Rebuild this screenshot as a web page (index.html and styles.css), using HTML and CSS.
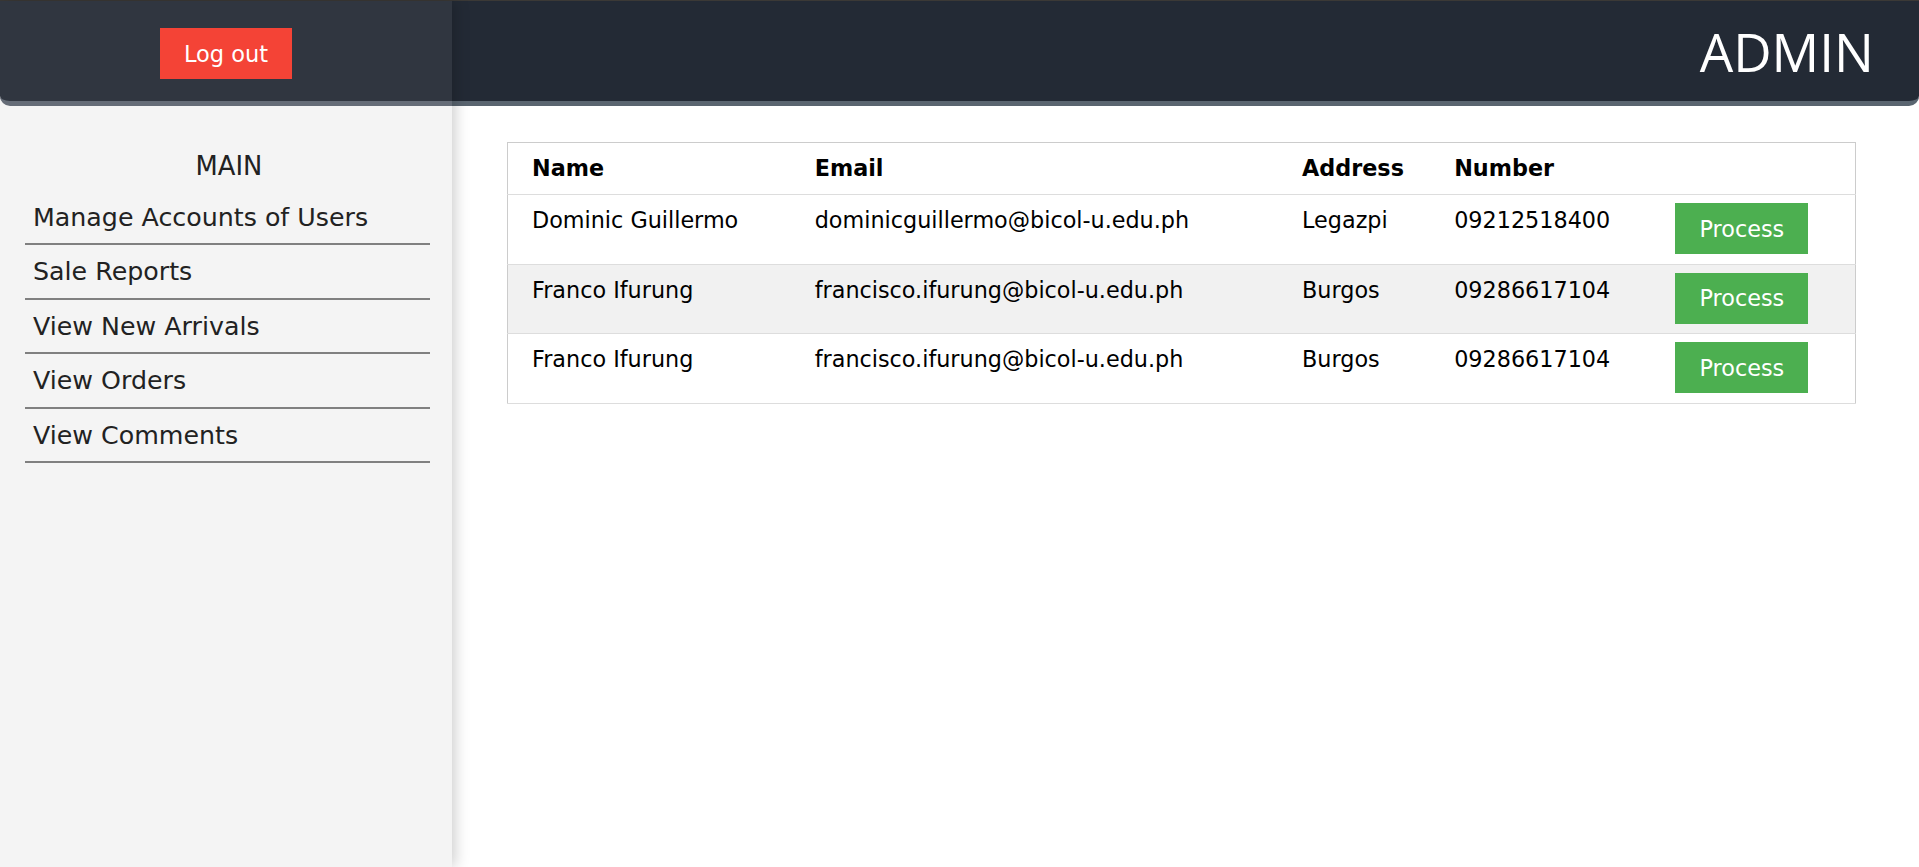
FILE: index.html
```html
<!DOCTYPE html>
<html lang="en">
<head>
<meta charset="utf-8">
<title>Admin</title>
<link rel="stylesheet" href="styles.css">
</head>
<body>
<div class="page">
  <aside class="sidebar">
    <div class="sidebar-top">
      <button class="btn-logout" type="button">Log out</button>
    </div>
    <nav class="menu">
      <div class="menu-title">MAIN</div>
      <a class="menu-item" href="#">Manage Accounts of Users</a>
      <a class="menu-item" href="#">Sale Reports</a>
      <a class="menu-item" href="#">View New Arrivals</a>
      <a class="menu-item" href="#">View Orders</a>
      <a class="menu-item" href="#">View Comments</a>
    </nav>
  </aside>
  <div class="main">
    <header class="topbar">
      <h1 class="brand">ADMIN</h1>
    </header>
    <section class="content">
      <table class="orders">
        <colgroup>
          <col class="c-name"><col class="c-email"><col class="c-addr"><col class="c-num"><col class="c-act">
        </colgroup>
        <thead>
          <tr><th>Name</th><th>Email</th><th>Address</th><th>Number</th><th></th></tr>
        </thead>
        <tbody>
          <tr>
            <td>Dominic Guillermo</td>
            <td>dominicguillermo@bicol-u.edu.ph</td>
            <td>Legazpi</td>
            <td>09212518400</td>
            <td class="act"><button class="btn-process" type="button">Process</button></td>
          </tr>
          <tr>
            <td>Franco Ifurung</td>
            <td>francisco.ifurung@bicol-u.edu.ph</td>
            <td>Burgos</td>
            <td>09286617104</td>
            <td class="act"><button class="btn-process" type="button">Process</button></td>
          </tr>
          <tr>
            <td>Franco Ifurung</td>
            <td>francisco.ifurung@bicol-u.edu.ph</td>
            <td>Burgos</td>
            <td>09286617104</td>
            <td class="act"><button class="btn-process" type="button">Process</button></td>
          </tr>
        </tbody>
      </table>
    </section>
  </div>
</div>
</body>
</html>
```
FILE: styles.css
```css
* { box-sizing: border-box; }

html, body {
  margin: 0;
  padding: 0;
  height: 100%;
  background: #ffffff;
}

body {
  font-family: "DejaVu Sans", Verdana, sans-serif;
  color: #222;
  overflow: hidden;
}

.page {
  display: grid;
  grid-template-columns: 452px 1fr;
  height: 100vh;
  border-top: 1px solid #3b3936;
}

/* ---------- Sidebar ---------- */
.sidebar {
  position: relative;
  z-index: 2;
  background: #f4f4f4;
  box-shadow: 3px 0 14px rgba(0, 0, 0, 0.2);
  display: flex;
  flex-direction: column;
}

.sidebar-top {
  height: 105px;
  background: #303640;
  border-bottom: 5px solid #656c77;
  border-bottom-left-radius: 10px;
  display: flex;
  justify-content: center;
  align-items: flex-start;
  padding-top: 27px;
}

.btn-logout {
  width: 132px;
  height: 51px;
  border: none;
  background: #f44336;
  color: #ffffff;
  font-family: "DejaVu Sans", Verdana, sans-serif;
  font-size: 22.5px;
  padding: 0;
  cursor: pointer;
}

.menu {
  display: flex;
  flex-direction: column;
  padding: 42px 22px 0 25px;
}

.menu-title {
  text-align: center;
  font-size: 25.8px;
  line-height: 36.5px;
  color: #222;
  margin-bottom: 6px;
  padding-left: 3px;
}

.menu-item {
  display: block;
  font-size: 25.3px;
  line-height: 36.5px;
  padding: 9px 8px 7px;
  color: #222;
  text-decoration: none;
  border-bottom: 2px solid #808080;
}

/* ---------- Main ---------- */
.main {
  display: flex;
  flex-direction: column;
  min-width: 0;
}

.topbar {
  height: 105px;
  background: #232a35;
  border-bottom: 5px solid #5a6570;
  border-bottom-right-radius: 10px;
  display: flex;
  justify-content: flex-end;
  align-items: center;
  padding-right: 45px;
}

.brand {
  margin: 0;
  font-family: "Open Sans", "Noto Sans", sans-serif;
  font-weight: 400;
  font-size: 53px;
  line-height: 1;
  color: #ffffff;
}

.content {
  padding: 36px 0 0 55px;
}

.orders {
  width: 1349px;
  border-collapse: collapse;
  border: 1px solid #cccccc;
  table-layout: fixed;
  font-family: "DejaVu Sans", Verdana, sans-serif;
  font-size: 22.3px;
  color: #000;
}

.c-name { width: 297px; }
.c-email { width: 487px; }
.c-addr { width: 152px; }
.c-num { width: 221px; }
.c-act { width: 190px; }

.orders tr {
  border-bottom: 1px solid #dddddd;
}

.orders tbody tr:nth-child(even) {
  background: #f1f1f1;
}

.orders th,
.orders td {
  text-align: left;
  vertical-align: top;
  line-height: 30px;
  padding: 10px 10px 10px;
  white-space: nowrap;
}

.orders th {
  font-weight: 700;
  padding: 10px 10px 11px;
}

.orders th:first-child,
.orders td:first-child {
  padding-left: 24px;
}

.orders td.act {
  padding: 8px 10px 9.5px;
}

.btn-process {
  display: block;
  width: 133px;
  height: 51px;
  border: none;
  background: #4caf50;
  color: #ffffff;
  font-family: "DejaVu Sans", Verdana, sans-serif;
  font-size: 22.3px;
  padding: 0;
  cursor: pointer;
}
```
